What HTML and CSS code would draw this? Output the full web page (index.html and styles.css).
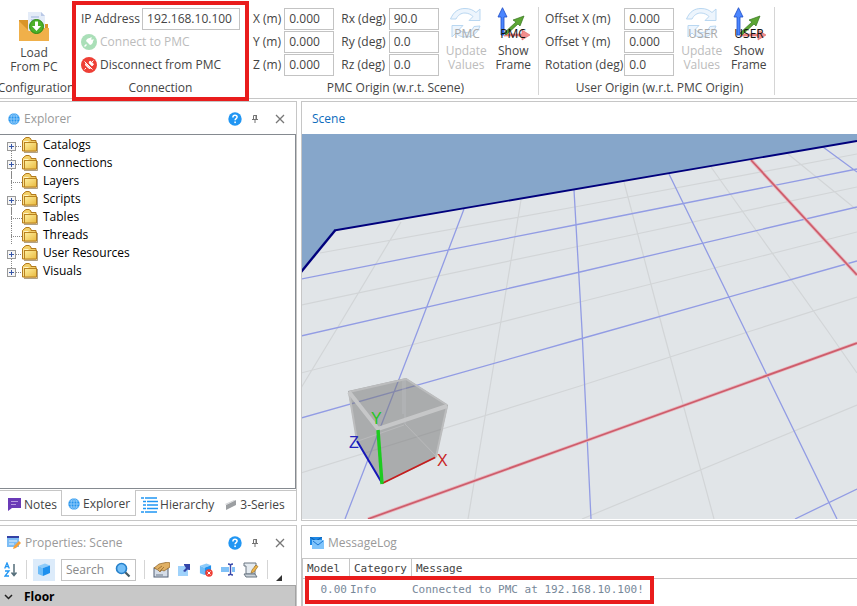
FILE: index.html
```html
<!DOCTYPE html>
<html lang="en">
<head>
<meta charset="utf-8">
<title>Scene - PMC</title>
<link rel="stylesheet" href="styles.css">
</head>
<body>
<svg class="defs" aria-hidden="true">
  <defs>
    <linearGradient id="gold" x1="0" y1="0" x2="1" y2="1"><stop offset="0" stop-color="#fff0a0"/><stop offset="1" stop-color="#e9b93e"/></linearGradient>
    <symbol id="folder" viewBox="0 0 16 16">
      <path d="M.5 14V3.500L2 2l2-1.500h3L9 2v1.500h5V14z" fill="#f3d069" stroke="#b37a1c"/>
      <path d="M2.500 4.500h4M2 4v9" stroke="#fff6c8" fill="none"/>
      <rect x="2.500" y="5.500" width="12" height="8.500" fill="url(#gold)" stroke="#b98220"/>
      <path d="M2 15.500h13.500V6" fill="none" stroke="#8e7850" stroke-opacity=".7"/>
    </symbol>
    <symbol id="globe" viewBox="0 0 12 12">
      <circle cx="6" cy="6" r="5.700" fill="#2494ee"/>
      <path d="M6 0v12M0 6h12M1 3h10M1 9h10" stroke="#a5d4fa" stroke-width=".8"/>
      <ellipse cx="6" cy="6" rx="3" ry="5.700" fill="none" stroke="#a5d4fa" stroke-width=".8"/>
    </symbol>
    <symbol id="help" viewBox="0 0 14 14">
      <circle cx="7" cy="7" r="6.700" fill="#2196f3"/>
      <path d="M4.900 5.400c0-1.500.9-2.200 2.100-2.200s2.100.7 2.100 1.900c0 1.500-2 1.500-2 3.200" fill="none" stroke="#fff" stroke-width="1.500"/>
      <rect x="6.300" y="9.500" width="1.600" height="1.600" fill="#fff"/>
    </symbol>
    <symbol id="pin" viewBox="0 0 8 10"><path d="M2.500 1.500h3v4h-3zM1 5.500h6M4 6v3" fill="none" stroke="#737373"/><path d="M4.500 1H6v4.500H4.500z" fill="#737373"/></symbol>
    <symbol id="close" viewBox="0 0 10 10"><path d="M1 1l8 8M9 1l-8 8" fill="none" stroke="#777" stroke-width="1.300"/></symbol>
    <symbol id="cycle" viewBox="0 0 34 32">
      <g fill="#edf5fd" stroke="#b9d7f1" stroke-linejoin="round">
        <path d="M1.500 12C5 4 10 1.500 16 1.500c5 0 8 1.500 11 4l4-3.500v11.500H20l4-4c-2-2-5-3.500-8-3.500-4 0-7 2-9 6z"/>
        <path d="M31 19c-3 8-8 11-14 11-5 0-8-1.500-10-4l-4 4V18.500h11l-4 4c2 2 4 3 7 3 4 0 6-2 8-6z"/>
      </g>
    </symbol>
    <symbol id="axes" viewBox="0 0 34 34">
      <path d="M8 29l3-2h15v-4l8 5-8 5v-4H9z" fill="#f28d8d" stroke="#dc6666" stroke-width=".6"/>
      <path d="M8 26L20 15l-3-2 11-4-4 10-2-2L10 28z" fill="#5ca634" stroke="#35741e" stroke-width=".7"/>
      <path d="M5 28V10H2L6.500.7 11 10H8v18z" fill="#4b86ff" stroke="#1d4bc5" stroke-width=".8"/>
    </symbol>
    <symbol id="cube" viewBox="0 0 14 14">
      <path d="M1 3l7-2.500L13 2.500 6 5z" fill="#8dcbfa"/><path d="M1 3l5 2v8l-5-2z" fill="#6dbcf8"/><path d="M6 5l7-2.500V10L6 13z" fill="#1e90ee"/>
    </symbol>
  </defs>
</svg>

<header class="ribbon">
  <section class="group config">
    <button class="big">
      <svg width="32" height="32" viewBox="0 0 32 32">
        <path d="M1 9h9l3 4h17v17H1z" fill="#d99428"/>
        <path d="M10 1h13l4 4v22H10z" fill="#e4ecf8"/><path d="M23 1v4h4z" fill="#b9c8e6"/>
        <path d="M13 6h8M13 9h6" stroke="#b4c4e4" stroke-width="1.500"/>
        <path d="M1 10l10 10h4l6-3h10v13H1z" fill="#f0b04a"/>
        <circle cx="18.500" cy="15.500" r="7" fill="#4cb028" stroke="#2d8a14"/>
        <path d="M17 10.500h3V15h3l-4.500 5L14 15h3z" fill="#fff"/>
      </svg>
      <span>Load<br>From PC</span>
    </button>
    <h2>Configuration</h2>
  </section>
  <section class="group connection">
    <div class="rows">
      <div class="ip"><label for="ip">IP Address</label><input id="ip" value="192.168.10.100"></div>
      <button class="cmd" disabled>
        <svg width="16" height="16" viewBox="0 0 16 16"><circle cx="8" cy="8" r="8" fill="#aadfb8"/><path d="M3.500 12.500L5.500 10.500" stroke="#fff" stroke-width="1.400"/><path d="M5 7l4 4c2-.5 3-2 3-4L9 4C7 4 5.500 5 5 7z" fill="#fff"/><path d="M8.500 5.500L10.500 3.500M10.500 7.500L12.500 5.500" stroke="#fff" stroke-width="1.200"/></svg>
        Connect to PMC</button>
      <button class="cmd">
        <svg width="16" height="16" viewBox="0 0 16 16"><circle cx="8" cy="8" r="8" fill="#ee3f36"/><path d="M3.500 12.500L5 11M4.500 8l3.500 3.500c1.500 0 2-.5 2.500-1.500L6 5.500C5 6 4.500 6.500 4.500 8zM8 6l3 3 1.500-2L9 4zM11 5l1.500-1.500" stroke="#fff" fill="#fff"/><path d="M4 4l8 8" stroke="#ee3f36" stroke-width="2.400"/><path d="M3.500 4.500l8 8" stroke="#fff"/></svg>
        Disconnect from PMC</button>
    </div>
    <h2>Connection</h2>
  </section>
  <section class="group pmc">
    <div class="tools">
      <div class="fields">
        <label for="x">X (m)</label><input id="x" value="0.000">
        <label for="y">Y (m)</label><input id="y" value="0.000">
        <label for="z">Z (m)</label><input id="z" value="0.000">
      </div>
      <div class="fields">
        <label for="rx">Rx (deg)</label><input id="rx" value="90.0">
        <label for="ry">Ry (deg)</label><input id="ry" value="0.0">
        <label for="rz">Rz (deg)</label><input id="rz" value="0.0">
      </div>
      <button class="big" disabled><svg width="34" height="34" viewBox="0 0 34 34"><use href="#cycle" width="34" height="32"/><text x="18" y="31" text-anchor="middle">PMC</text></svg><span>Update<br>Values</span></button>
      <button class="big"><svg width="34" height="34" viewBox="0 0 34 34"><use href="#axes" width="34" height="34"/><text x="17" y="31" text-anchor="middle">PMC</text></svg><span>Show<br>Frame</span></button>
    </div>
    <h2>PMC Origin (w.r.t. Scene)</h2>
  </section>
  <section class="group user">
    <div class="tools">
      <div class="fields">
        <label for="ox">Offset X (m)</label><input id="ox" value="0.000">
        <label for="oy">Offset Y (m)</label><input id="oy" value="0.000">
        <label for="rot">Rotation (deg)</label><input id="rot" value="0.0">
      </div>
      <button class="big" disabled><svg width="34" height="34" viewBox="0 0 34 34"><use href="#cycle" width="34" height="32"/><text x="18" y="31" text-anchor="middle">USER</text></svg><span>Update<br>Values</span></button>
      <button class="big"><svg width="34" height="34" viewBox="0 0 34 34"><use href="#axes" width="34" height="34"/><text x="17" y="31" text-anchor="middle">USER</text></svg><span>Show<br>Frame</span></button>
    </div>
    <h2>User Origin (w.r.t. PMC Origin)</h2>
  </section>
</header>

<main>
  <div class="column">
    <section class="panel explorer">
      <div class="title">
        <svg width="12" height="12"><use href="#globe"/></svg><h3>Explorer</h3>
        <button aria-label="Help"><svg width="14" height="14"><use href="#help"/></svg></button>
        <button aria-label="Pin"><svg width="8" height="10"><use href="#pin"/></svg></button>
        <button aria-label="Close"><svg width="10" height="10"><use href="#close"/></svg></button>
      </div>
      <ul class="tree">
        <li class="open"><svg width="16" height="16"><use href="#folder"/></svg>Catalogs</li>
        <li class="open"><svg width="16" height="16"><use href="#folder"/></svg>Connections</li>
        <li><svg width="16" height="16"><use href="#folder"/></svg>Layers</li>
        <li class="open"><svg width="16" height="16"><use href="#folder"/></svg>Scripts</li>
        <li><svg width="16" height="16"><use href="#folder"/></svg>Tables</li>
        <li><svg width="16" height="16"><use href="#folder"/></svg>Threads</li>
        <li class="open"><svg width="16" height="16"><use href="#folder"/></svg>User Resources</li>
        <li class="open"><svg width="16" height="16"><use href="#folder"/></svg>Visuals</li>
      </ul>
      <nav class="tabs">
        <button><svg width="13" height="13" viewBox="0 0 13 13"><path d="M0 0h13v10H4l-4 3z" fill="#6a3ab7"/><path d="M3 3.500h7M3 6.500h5" stroke="#b79be0"/></svg>Notes</button>
        <button class="active"><svg width="12" height="12"><use href="#globe"/></svg>Explorer</button>
        <button><svg width="17" height="16" viewBox="0 0 17 16"><path d="M0 1h3M4 1h12M2 4.500h3M6 4.500h11M2 8h3M6 8h11M2 11.500h3M6 11.500h11M0 15h3M4 15h12" stroke="#2196f3" stroke-width="1.600"/></svg>Hierarchy</button>
        <button><svg width="12" height="12" viewBox="0 0 12 12"><path d="M1 6l10-5v5L1 11z" fill="#9c9fa2"/><path d="M1 6l10-5H9L0 5z" fill="#d4d6d8"/></svg>3-Series</button>
      </nav>
    </section>
    <section class="panel properties">
      <div class="title">
        <svg width="14" height="14" viewBox="0 0 14 14"><rect width="12" height="11" fill="#7dbdf5"/><rect width="12" height="2" fill="#3441a5"/><path d="M2 5h8M2 8h5" stroke="#e3f2fd"/><path d="M6 13l1-3 5-5 2 2-5 5z" fill="#f5a03a"/></svg><h3>Properties: Scene</h3>
        <button aria-label="Help"><svg width="14" height="14"><use href="#help"/></svg></button>
        <button aria-label="Pin"><svg width="8" height="10"><use href="#pin"/></svg></button>
        <button aria-label="Close"><svg width="10" height="10"><use href="#close"/></svg></button>
      </div>
      <div class="toolbar">
        <button aria-label="Sort"><svg width="14" height="16" viewBox="0 0 14 16"><path d="M.7 6.500L3 1l2.300 5.500M1.500 4.700h3M1 9h4L1 14h4" fill="none" stroke="#2196f3" stroke-width="1.300"/><path d="M10 2v11M7.500 10.500L10 13.500l2.500-3" fill="none" stroke="#546e7a" stroke-width="1.500"/></svg></button>
        <i></i>
        <button class="on" aria-label="Objects"><svg width="14" height="14"><use href="#cube"/></svg></button>
        <div class="search"><input aria-label="Search" placeholder="Search"><svg width="16" height="16" viewBox="0 0 16 16"><path d="M9.500 9.500l5 5" stroke="#455a64" stroke-width="2.200"/><circle cx="6.500" cy="6.500" r="5" fill="#74bff8" stroke="#2680ca" stroke-width="1.600"/></svg></div>
        <i></i>
        <button aria-label="Properties"><svg width="17" height="16" viewBox="0 0 17 16"><rect x="1" y="6" width="14" height="9" fill="#d5dde8" stroke="#526076"/><path d="M3 13h7" stroke="#6d7888"/><path d="M1 6l5-4 9-2 2 1v4l-6 4-2-1-2 2-2-2z" fill="#e0b064" stroke="#8a5f24" stroke-width=".7"/><path d="M5 7l4-3M7 9l4-4" stroke="#8a5f24" stroke-width=".7"/></svg></button>
        <button aria-label="Go to"><svg width="13" height="13" viewBox="0 0 13 13"><rect y="3" width="10" height="10" fill="#9fd2fb"/><path d="M5 8l3-3-2-3V1h6v6h-1L9.500 6.500 7 9z" fill="#3344a8"/></svg></button>
        <button aria-label="Delete"><svg width="14" height="14" viewBox="0 0 14 14"><use href="#cube" width="13" height="13"/><circle cx="10" cy="10" r="3.700" fill="#ee3e34"/><path d="M8.500 8.500l3 3M11.500 8.500l-3 3" stroke="#fff"/></svg></button>
        <button aria-label="Rename"><svg width="14" height="13" viewBox="0 0 14 13"><path d="M0 4h8v5H0zM11 4h3v5h-3z" fill="#80c1f7"/><path d="M7 1c2 0 2 .5 2.500 1C10 1.500 10 1 12 1M9.500 2v9M7 12c2 0 2-.5 2.500-1 .5.500.5 1 2.500 1" fill="none" stroke="#3949ab" stroke-width="1.400"/></svg></button>
        <button aria-label="Script"><svg width="16" height="16" viewBox="0 0 16 16"><path d="M1 1h12v3h-1v8H3V4H1z" fill="#e5ebf0" stroke="#6a7682"/><path d="M1 12h11l2 3H3z" fill="#cbd3da" stroke="#6a7682"/><path d="M8 11l1-3 4-5 2 1.500L11 10z" fill="#eeb64d" stroke="#8d6520" stroke-width=".6"/></svg></button>
        <i></i>
        <svg class="more" width="6" height="6" viewBox="0 0 6 6"><path d="M6 0v6H0z" fill="#333"/></svg>
      </div>
      <button class="section"><svg width="9" height="6" viewBox="0 0 9 6"><path d="M1 1l3.500 3.500L8 1" fill="none" stroke="#222" stroke-width="1.500"/></svg>Floor</button>
    </section>
  </div>

  <div class="column">
    <section class="panel scene">
      <div class="title"><h3>Scene</h3></div>
      <svg class="view" viewBox="302 134 555 385" preserveAspectRatio="xMinYMin slice" role="img" aria-label="Scene">
        <defs><clipPath id="floor"><path d="M302 271L335 230.500 857 141V519H302z"/></clipPath></defs>
        <rect x="302" y="134" width="555" height="385" fill="#86a6ca"/>
        <path d="M302 271L335 230.500 857 141V519H302z" fill="#e1e5e8"/>
        <g clip-path="url(#floor)" fill="none">
          <path d="M401 222L338 327 301 388M521 200L500 327 468 519M624 182L663 330 714 519M711 167L827 330 857 373M788 154L857 210M320 253L580 206 857 154M301 305L580 246 857 187M301 373L470 330 580 302 857 232M301 473L580 386 754 330 857 297M582 519L857 405" stroke="#d2d5d7" stroke-width="1.200"/>
          <path d="M464 209L418 330 345 519M574 190L582 330 591 519M669 174L745 330 837 519M823 147L857 172M301 279L580 224 857 169M301 336L580 272 857 207M301 418L580 339 857 261M795 519L857 489" stroke="#929ce4" stroke-width="1.300"/>
          <path d="M751 160L857 275M368 519L577 444 857 343" stroke="#e9b4bd" stroke-width="3.400"/>
          <path d="M751 160L857 275M368 519L577 444 857 343" stroke="#cd5d6b" stroke-width="1.700"/>
        </g>
        <path d="M301 272L335 230.500" stroke="#00007c" stroke-width="2.400"/>
        <path d="M334 230.500L857 141" stroke="#00007c" stroke-width="1.800"/>
        <path d="M348 391L406 378 448 405 436 458 382 484 357 441z" fill="#777" fill-opacity=".52"/>
        <path d="M405 380v44l32 33M404 425l-46 16M403 380v34" fill="none" stroke="#c3c4c5" stroke-width=".8" opacity=".7"/>
        <path d="M349 392l57-13 41 26M447 406l-11 51M349 392l8 49" fill="none" stroke="#bcbdbe" stroke-width="2"/>
        <path d="M349 392l29 37 69-23" fill="none" stroke="#c6c7c8" stroke-width="4"/>
        <path d="M382 483.500l53-26" stroke="#c51d1d" stroke-width="1.800"/>
        <path d="M382 483L357 441" stroke="#1616b8" stroke-width="2"/>
        <path d="M378 430l4 54" stroke="#1dcb20" stroke-width="3.400"/>
        <text x="437" y="466" fill="#c82626">X</text>
        <text x="371" y="424" fill="#22c722">Y</text>
        <text x="349" y="448" fill="#2424bd">Z</text>
      </svg>
    </section>
    <section class="panel log">
      <div class="title">
        <svg width="14" height="12" viewBox="0 0 14 12"><path d="M0 0h12v8H0z" fill="#1e88e5"/><path d="M0 0l6 4 6-4" fill="none" stroke="#0d5fae"/><path d="M2 3h12v9H2z" fill="#7fc4fb"/><path d="M3 4l5 4 5-4" fill="none" stroke="#1976d2"/></svg><h3>MessageLog</h3>
      </div>
      <div class="messages">
        <table>
          <thead><tr><th>Model</th><th>Category</th><th>Message</th></tr></thead>
          <tbody><tr><td>0.00</td><td>Info</td><td>Connected to PMC at 192.168.10.100!</td></tr></tbody>
        </table>
      </div>
    </section>
  </div>
</main>
</body>
</html>
```
FILE: styles.css
```css
*, *::before, *::after { box-sizing: border-box; }
body {
  margin: 0;
  height: 100vh;
  overflow: hidden;
  display: flex;
  flex-direction: column;
  background: #fff;
  color: #444;
  font: 12px/14px "Open Sans", "Noto Sans", sans-serif;
}
button, input { font: inherit; color: inherit; }
button { border: 0; padding: 0; background: none; }
h2, h3 { margin: 0; font-size: 12px; font-weight: 400; }
svg { display: block; flex: none; }
.defs { position: absolute; width: 0; height: 0; }

/* Ribbon */
.ribbon { display: flex; flex: none; border-bottom: 1px solid #c6c6c6; padding: 7px 0 3px; }
.group { display: flex; flex-direction: column; justify-content: space-between; align-items: center; height: 88px; flex: none; white-space: nowrap; }
.group h2 { line-height: 14px; }
.config { width: 72px; }
.config .big { padding: 4px 4px 0 0; }
.connection { position: relative; width: 177px; }
.connection::after { content: ""; position: absolute; inset: -6px 0 -6px 0; border: 4px solid #e91c1c; pointer-events: none; }
.rows { width: 100%; padding-left: 9px; display: grid; grid-auto-rows: 23px; }
.ip { display: flex; align-items: center; gap: 2px; }
input { height: 22px; border: 1px solid #c3c3c3; background: #fff; padding: 0 4px; min-width: 0; outline: 0; }
.ip input { width: 98px; }
.cmd { display: flex; align-items: center; gap: 3px; }
button:disabled { color: #bcbcbc; }
.pmc { width: 290px; border-right: 1px solid #d5d5d5; padding-left: 4px; }
.user { width: 236px; border-right: 1px solid #d5d5d5; padding-left: 6px; }
.tools { display: flex; width: 100%; }
.fields { display: grid; grid-template-columns: auto 50px; grid-auto-rows: 23px; column-gap: 3px; align-items: center; }
.fields + .fields { margin-left: 7px; }
.user .fields { column-gap: 1px; }
.big { display: flex; flex-direction: column; align-items: center; }
.big svg { margin-bottom: 3px; }
.tools .big { width: 47px; }
.fields + .big { margin-left: 4px; }
.big text { font: 12px "Open Sans", sans-serif; fill: #111; }
.big:disabled text { fill: #aaa; }

/* Docked panels */
main { flex: 1; min-height: 0; padding-top: 2px; display: grid; grid-template-columns: 297px minmax(0, 1fr); column-gap: 4px; }
.column { display: flex; flex-direction: column; gap: 4px; min-height: 0; }
.panel { border: 1px solid #c6c6c6; display: flex; flex-direction: column; }
.column:first-child .panel { border-left: 0; }
.column:last-child .panel { border-right: 0; }
.explorer, .scene { flex: 1; min-height: 0; }
.properties, .log { flex: none; height: 81px; border-bottom: 0; }
.title { display: flex; align-items: center; height: 32px; flex: none; padding: 2px 11px 0 8px; gap: 4px; color: #999; }
.title h3 { flex: 1; }
.title button + button { margin-left: 5px; }
.title button:last-child { margin-left: 12px; }
.scene .title { color: #0e6cbd; padding-left: 10px; }
.view { width: 100%; flex: 1; min-height: 0; margin-bottom: 1px; }
.view text { font: 16px "Liberation Sans", sans-serif; }

.tree { list-style: none; margin: 0; padding: 1px 0 0 7px; flex: 1; border: 1px solid #858a90; border-left: 0; color: #000; }
.tree li { position: relative; height: 18px; display: flex; align-items: center; gap: 5px; padding-left: 15px; }
.tree li::before { content: ""; position: absolute; left: 4px; top: 0; width: 11px; height: 11px; border: dotted #888; border-width: 0 0 1px 1px; }
.tree li:not(:last-child)::after { content: ""; position: absolute; left: 4px; top: 9px; height: 9px; border-left: 1px dotted #888; }
.tree li.open { background: repeating-linear-gradient(90deg, #888 0 1px, #fff 1px 2px) 9px 10px / 6px 1px no-repeat; }
.tree li.open::before { left: 0; top: 6px; width: 9px; height: 9px; border: 1px solid #999; background: linear-gradient(#3656a8, #3656a8) 1px 3px / 5px 1px no-repeat, linear-gradient(#3656a8, #3656a8) 3px 1px / 1px 5px no-repeat, #f6f6f6; }
.tree li.open:not(:last-child)::after { top: 15px; height: 9px; }

.tabs { display: flex; height: 30px; margin-top: 1px; }
.tabs button { display: flex; align-items: center; gap: 3px; height: 26px; border-top: 1px solid #c6c6c6; padding: 2px 4px 0 8px; white-space: nowrap; }
.tabs .active { border: solid #c6c6c6; border-width: 0 1px 1px; padding: 3px 5px 0 6px; }
.tabs button:nth-child(3) { gap: 2px; padding: 2px 5px 0 5px; }
.tabs button:last-child { flex: 1; padding-left: 6px; }

.properties .title { padding-left: 7px; }
.toolbar { display: flex; align-items: center; height: 27px; padding: 0 0 4px 4px; gap: 8px; }
.toolbar i { width: 1px; height: 19px; background: #d5d5d5; }
.toolbar .on { background: #dcebfa; padding: 4px; height: 22px; margin: 0 -2px; }
.search { display: flex; align-items: center; width: 75px; height: 22px; border: 1px solid #c3c3c3; padding-right: 4px; }
.search input { flex: 1; height: 20px; border: 0; }
.search input::placeholder { color: #888; opacity: 1; }
.toolbar .more { align-self: flex-end; }
.section { display: flex; align-items: center; gap: 11px; flex: 1; padding: 2px 0 0 4px; background: #c8c8c8; border: solid #a3a3a3; border-width: 1px 1px 0 0; color: #000; font-weight: 700; }

/* Message log */
.messages { position: relative; flex: 1; border: solid #c6c6c6; border-width: 1px 0 0 1px; font-family: "DejaVu Sans Mono", monospace; }
.messages::after { content: ""; position: absolute; left: 2px; top: 17px; width: 349px; height: 28px; border: 4px solid #e91c1c; pointer-events: none; }
table { border-collapse: separate; border-spacing: 0; width: 100%; font-size: 11px; }
th { font-weight: 400; text-align: left; height: 20px; padding: 0 4px; border: solid #c6c6c6; border-width: 0 1px 1px 0; }
th:last-child { border-right: 0; }
td { height: 22px; padding: 0; color: #778899; }
th:nth-child(1) { width: 47px; }
th:nth-child(2) { width: 62px; }
td:nth-child(1) { text-align: right; padding-right: 3px; }
```
